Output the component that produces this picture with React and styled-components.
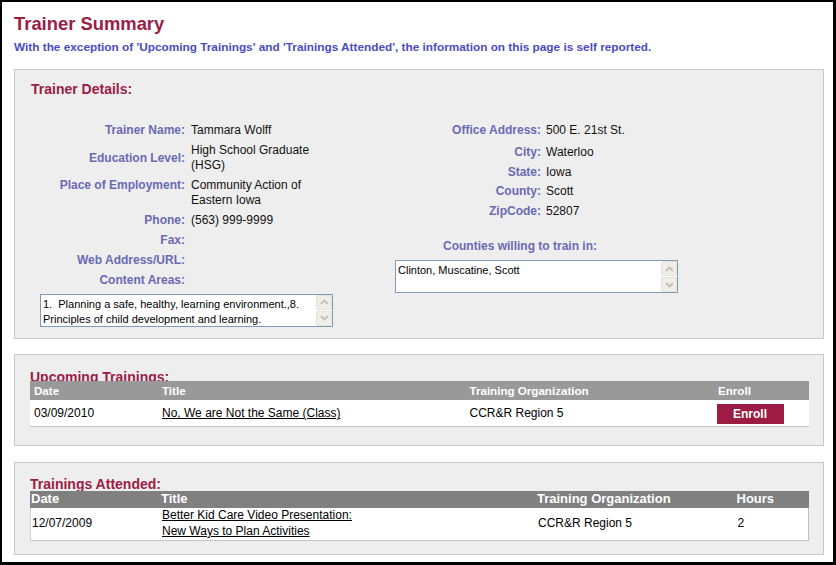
import React from 'react'
import styled, { createGlobalStyle } from 'styled-components'

const maroon = '#9c1c44'
const labelBlue = '#6a6ab4'

const GlobalStyle = createGlobalStyle`
  body {
    margin: 0;
    background: #fff;
    font-family: "Liberation Sans", Arial, sans-serif;
  }
`

const Chevron = ({ up }) => (
  <svg width="9" height="6" viewBox="0 0 9 6">
    <path
      d={up ? 'M1 5 L4.5 1.5 L8 5' : 'M1 1 L4.5 4.5 L8 1'}
      fill="none"
      stroke="#c2c1b8"
      strokeWidth="1.8"
    />
  </svg>
)

const TextBox = ({ width, children }) => (
  <FakeArea $w={width}>
    <AreaText>{children}</AreaText>
    <ScrollBar>
      <ScrollButton><Chevron up /></ScrollButton>
      <ScrollButton><Chevron /></ScrollButton>
    </ScrollBar>
  </FakeArea>
)

const leftRows = [
  { label: 'Trainer Name:', value: 'Tammara Wolff' },
  { label: 'Education Level:', value: 'High School Graduate (HSG)', valign: 'center' },
  { label: 'Place of Employment:', value: 'Community Action of Eastern Iowa', valign: 'flex-start' },
  { label: 'Phone:', value: '(563) 999-9999' },
  { label: 'Fax:', value: '' },
  { label: 'Web Address/URL:', value: '' },
  { label: 'Content Areas:', value: '' },
]

const rightRows = [
  { label: 'Office Address:', value: '500 E. 21st St.' },
  { label: 'City:', value: 'Waterloo' },
  { label: 'State:', value: 'Iowa' },
  { label: 'County:', value: 'Scott' },
  { label: 'ZipCode:', value: '52807' },
]

const upcomingCols = '128px 307.5px 248.5px 1fr'
const attendedCols = '130px 376px 199.5px 1fr'

const App = () => {
  return (
    <>
      <GlobalStyle />
      <Frame>
        <PageTitle>Trainer Summary</PageTitle>
        <Intro>
          With the exception of 'Upcoming Trainings' and 'Trainings Attended', the information on this page is self reported.
        </Intro>

        <Panel $top={15.4} $pad="11.5px 16px 11px 16px">
          <DetailsHeading>Trainer Details:</DetailsHeading>
          <DetailsBody>
            <LeftCol>
              {leftRows.map((r) => (
                <DetailRow key={r.label} $align={r.valign || 'center'}>
                  <Label $w={154}>{r.label}</Label>
                  <Value $gap={6}>{r.value}</Value>
                </DetailRow>
              ))}
              <AreaWrap>
                <TextBox width={293}>
                  {'1.  Planning a safe, healthy, learning environment.,8. Principles of child development and learning.'}
                </TextBox>
              </AreaWrap>
            </LeftCol>

            <RightCol>
              {rightRows.map((r, i) => (
                <DetailRow key={r.label} $align="center" $first={i === 0} $right>
                  <Label $w={146}>{r.label}</Label>
                  <Value $gap={5}>{r.value}</Value>
                </DetailRow>
              ))}
              <CountiesTitle>Counties willing to train in:</CountiesTitle>
              <TextBox width={283}>Clinton, Muscatine, Scott</TextBox>
            </RightCol>
          </DetailsBody>
        </Panel>

        <Panel $top={15} $pad="14.8px 14px 18px 15px">
          <SectionHeading $h={11.5}>Upcoming Trainings:</SectionHeading>
          <HeadRow $cols={upcomingCols} $bg="#999999" $size={11.6} $h={19} $pl={4}>
            <span>Date</span>
            <span>Title</span>
            <span>Training Organization</span>
            <span>Enroll</span>
          </HeadRow>
          <BodyRow $cols={upcomingCols} $pl={4} $pad="3.5px 0 1.5px">
            <span>03/09/2010</span>
            <span><TitleLink href="#">No, We are Not the Same (Class)</TitleLink></span>
            <span>CCR&amp;R Region 5</span>
            <span><EnrollButton type="button">Enroll</EnrollButton></span>
          </BodyRow>
        </Panel>

        <Panel $top={16} $pad="14px 14px 13px 15px">
          <SectionHeading $h={14.4}>Trainings Attended:</SectionHeading>
          <HeadRow $cols={attendedCols} $bg="#808080" $size={13} $h={16.6} $pl={1}>
            <span>Date</span>
            <span>Title</span>
            <span>Training Organization</span>
            <span>Hours</span>
          </HeadRow>
          <BodyRow $cols={attendedCols} $pl={1} $pad="0.5px 0 1px" $boxed>
            <span>12/07/2009</span>
            <span>
              <TitleLink href="#">Better Kid Care Video Presentation:</TitleLink>
              <br />
              <TitleLink href="#">New Ways to Plan Activities</TitleLink>
            </span>
            <span>CCR&amp;R Region 5</span>
            <span>2</span>
          </BodyRow>
        </Panel>
      </Frame>
    </>
  )
}

export default App

const Frame = styled.div`
  width: 836px;
  height: 565px;
  box-sizing: border-box;
  border-style: solid;
  border-color: #000;
  border-width: 2px 3px 3px 2px;
  padding: 10.5px 9px 0 12px;
  overflow: hidden;
  background: #fff;
`

const PageTitle = styled.h1`
  margin: 0;
  font-size: 18.4px;
  line-height: 22px;
  font-weight: bold;
  color: ${maroon};
`

const Intro = styled.p`
  margin: 5px 0 0;
  font-size: 11.8px;
  line-height: 14px;
  font-weight: bold;
  color: #4b4bc4;
`

const Panel = styled.section`
  width: 810px;
  box-sizing: border-box;
  margin-top: ${(p) => p.$top}px;
  padding: ${(p) => p.$pad};
  background: #eeeeee;
  border: 1px solid #c8c8c8;
`

const DetailsHeading = styled.h2`
  margin: 0 0 23.5px;
  font-size: 14px;
  line-height: 16px;
  font-weight: bold;
  color: ${maroon};
`

const DetailsBody = styled.div`
  display: flex;
  align-items: flex-start;
`

const LeftCol = styled.div`
  width: 364px;
  flex: none;
`

const RightCol = styled.div`
  flex: 1;
`

const DetailRow = styled.div`
  display: flex;
  align-items: ${(p) => p.$align};
  padding: ${(p) => (p.$first ? '2.5px 0 4.5px' : p.$right ? '2.3px 0' : '2.5px 0')};
  font-size: 12px;
  line-height: 15px;
`

const Label = styled.div`
  width: ${(p) => p.$w}px;
  flex: none;
  text-align: right;
  font-weight: bold;
  color: ${labelBlue};
`

const Value = styled.div`
  width: 130px;
  margin-left: ${(p) => p.$gap}px;
  color: #111;
`

const AreaWrap = styled.div`
  margin: 3px 0 0 9px;
`

const CountiesTitle = styled.div`
  width: 250px;
  margin: 17.8px 0 6px;
  text-align: center;
  font-size: 12px;
  line-height: 15px;
  font-weight: bold;
  color: ${labelBlue};
`

const FakeArea = styled.div`
  width: ${(p) => p.$w}px;
  height: 33px;
  box-sizing: border-box;
  display: flex;
  background: #fff;
  border: 1px solid #7f9db9;
`

const AreaText = styled.div`
  flex: 1;
  padding: 2px 3px 0 2px;
  font-size: 11px;
  line-height: 14.7px;
  color: #000;
  white-space: pre-wrap;
  overflow: hidden;
`

const ScrollBar = styled.div`
  width: 16px;
  flex: none;
  display: flex;
  flex-direction: column;
  gap: 1px;
`

const ScrollButton = styled.div`
  flex: 1;
  display: flex;
  align-items: center;
  justify-content: center;
  background: #efeee7;
  border: 1px solid #e4e3da;
  border-radius: 2px;
`

const SectionHeading = styled.h2`
  margin: 0;
  height: ${(p) => p.$h}px;
  overflow: hidden;
  font-size: 14px;
  line-height: 14px;
  font-weight: bold;
  color: ${maroon};
`

const HeadRow = styled.div`
  display: grid;
  grid-template-columns: ${(p) => p.$cols};
  background: ${(p) => p.$bg};
  color: #fff;
  font-size: ${(p) => p.$size}px;
  line-height: ${(p) => p.$h}px;
  font-weight: bold;

  span {
    padding-left: ${(p) => p.$pl}px;
  }
`

const BodyRow = styled.div`
  display: grid;
  grid-template-columns: ${(p) => p.$cols};
  align-items: center;
  padding: ${(p) => p.$pad};
  background: #fff;
  border-bottom: 1px solid #c4c4c4;
  border-left: ${(p) => (p.$boxed ? '1px solid #d0d0d0' : 'none')};
  border-right: ${(p) => (p.$boxed ? '1px solid #c0c0c0' : 'none')};
  font-size: 12px;
  line-height: 15.6px;
  color: #000;

  span {
    padding-left: ${(p) => p.$pl}px;
  }
`

const TitleLink = styled.a`
  color: #000;
  text-decoration: underline;
`

const EnrollButton = styled.button`
  display: block;
  width: 67px;
  height: 20.5px;
  margin-left: -1.5px;
  padding: 0;
  border: none;
  background: ${maroon};
  color: #fff;
  font-family: "Liberation Sans", Arial, sans-serif;
  font-size: 12px;
  font-weight: bold;
  cursor: pointer;
`
